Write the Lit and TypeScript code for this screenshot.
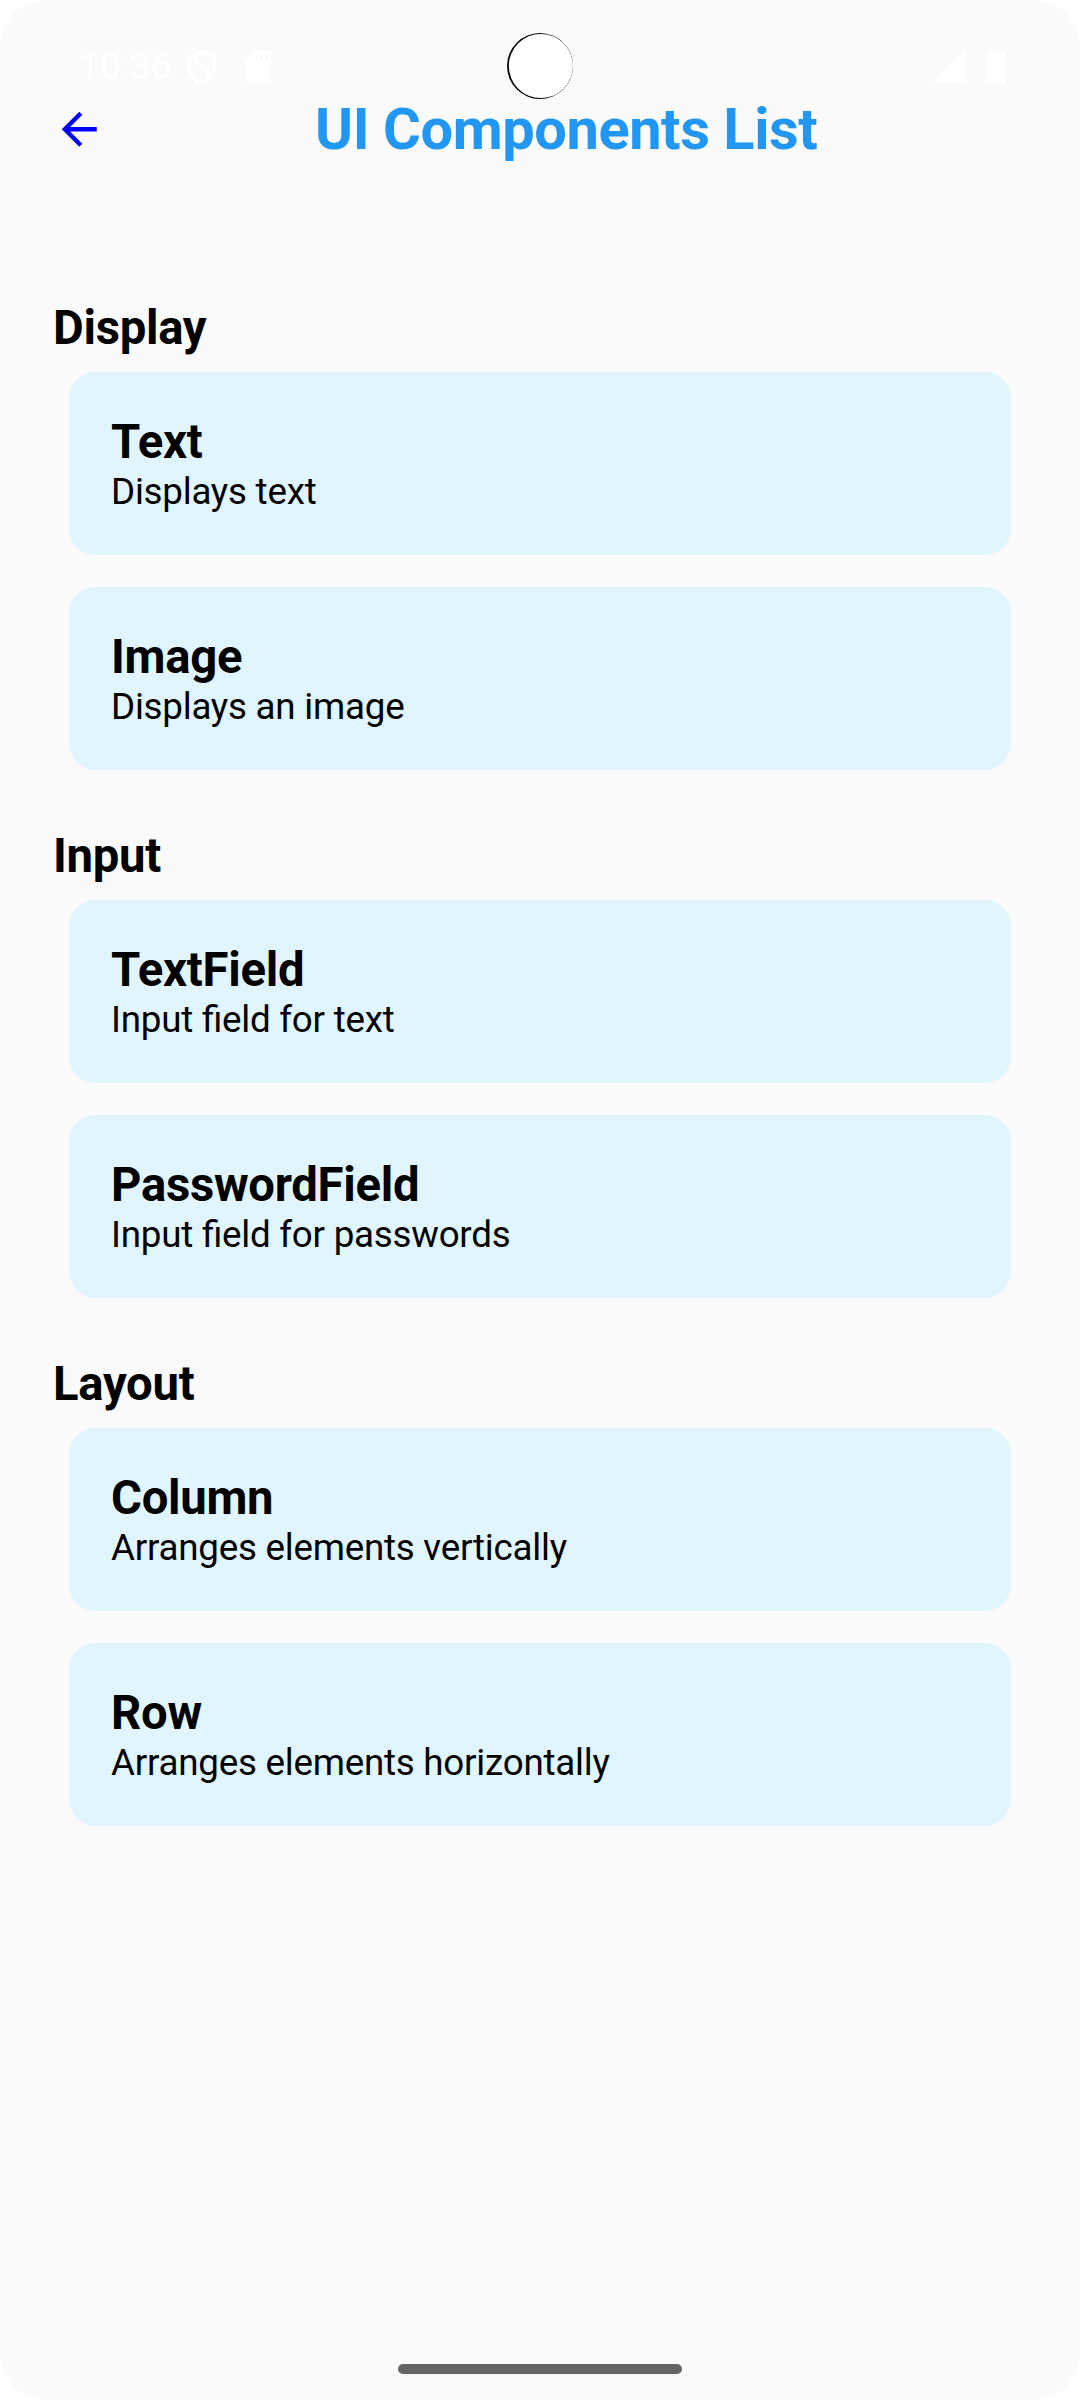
import { LitElement, html, css } from "lit";
import { customElement, property } from "lit/decorators.js";

interface Item {
  name: string;
  description: string;
}

interface Group {
  title: string;
  items: Item[];
}

const GROUPS: Group[] = [
  {
    title: "Display",
    items: [
      { name: "Text", description: "Displays text" },
      { name: "Image", description: "Displays an image" },
    ],
  },
  {
    title: "Input",
    items: [
      { name: "TextField", description: "Input field for text" },
      { name: "PasswordField", description: "Input field for passwords" },
    ],
  },
  {
    title: "Layout",
    items: [
      { name: "Column", description: "Arranges elements vertically" },
      { name: "Row", description: "Arranges elements horizontally" },
    ],
  },
];

@customElement("status-bar")
export class StatusBar extends LitElement {
  static styles = css`
    :host {
      display: block;
      height: 95px;
      position: relative;
      color: #fff;
    }
    .bar {
      display: flex;
      justify-content: space-between;
      align-items: flex-start;
      box-sizing: border-box;
      padding: 45px 74px 0 79px;
    }
    .side {
      display: flex;
      align-items: flex-start;
    }
    .time {
      width: 106px;
      font-size: 36.75px;
      line-height: 43px;
      letter-spacing: 0.25px;
    }
    svg {
      display: block;
      fill: #fff;
    }
    .shield {
      margin: 4px 0 0 1px;
    }
    .card {
      margin: 6px 0 0 28px;
    }
    .signal {
      margin-top: 4px;
    }
    .battery {
      margin: 4px 0 0 19px;
    }
    .camera {
      position: absolute;
      left: 507px;
      top: 33px;
    }
  `;

  render() {
    return html`
      <div class="bar">
        <div class="side">
          <span class="time">10:36</span>
          <svg class="shield" width="31" height="37" viewBox="0 0 31 37">
            <path
              fill="none"
              stroke="#fff"
              stroke-width="3.6"
              d="M15.500 3 L28 7.600 V17 C28 25 22.500 31 15.500 34 C8.500 31 3 25 3 17 V7.600 Z"
            />
            <path
              fill="none"
              stroke="#fff"
              stroke-width="3.8"
              d="M10 5 C9 12 11 14 16 18 C21 22 23 23 21.500 28.500"
            />
          </svg>
          <svg class="card" width="26" height="32" viewBox="0 0 26 32">
            <path
              fill-rule="evenodd"
              d="M10 0 H23 a3 3 0 0 1 3 3 V29 a3 3 0 0 1 -3 3 H3 a3 3 0 0 1 -3 -3 V10 Z M10 3 V9.500 H13 V3 Z M15 3 V9.500 H18 V3 Z M20 3 V9.500 H23 V3 Z"
            />
          </svg>
        </div>
        <div class="side">
          <svg class="signal" width="33" height="33" viewBox="0 0 33 33">
            <path d="M33 0 V33 H0 Z" />
          </svg>
          <svg class="battery" width="21" height="34" viewBox="0 0 21 34">
            <path
              d="M6.500 0 H14.500 V3 H18 a2.500 2.500 0 0 1 2.500 2.500 V31.500 a2.500 2.500 0 0 1 -2.500 2.500 H3 a2.500 2.500 0 0 1 -2.500 -2.500 V5.500 a2.500 2.500 0 0 1 2.500 -2.500 H6.500 Z"
            />
          </svg>
        </div>
      </div>
      <svg class="camera" width="67" height="66" viewBox="0 0 67 66">
        <circle cx="33" cy="33" r="33" fill="#000" />
        <circle cx="33.900" cy="33" r="32.100" />
      </svg>
    `;
  }
}

@customElement("component-card")
export class ComponentCard extends LitElement {
  static styles = css`
    :host {
      display: block;
      background: #e1f5fe;
      border-radius: 26.25px;
      padding: 42px;
      color: #000;
    }
    .name {
      font-size: 47.25px;
      line-height: 56px;
      font-weight: 700;
      letter-spacing: -0.28px;
    }
    .description {
      font-size: 36.75px;
      line-height: 43px;
      letter-spacing: -0.24px;
      font-feature-settings: "liga" 1;
    }
  `;

  @property() name = "";
  @property() description = "";

  render() {
    return html`
      <div class="name">${this.name}</div>
      <div class="description">${this.description}</div>
    `;
  }
}

@customElement("app-root")
export class AppRoot extends LitElement {
  static styles = css`
    :host {
      display: block;
      background: #fff;
    }
    .screen {
      display: flex;
      flex-direction: column;
      width: 1080px;
      height: 2400px;
      background: #fafafa;
      border-radius: 47px;
      overflow: hidden;
      font-family: Roboto, "Liberation Sans", sans-serif;
    }
    .header {
      display: flex;
      align-items: center;
      height: 68px;
      padding: 0 53px;
    }
    .back {
      display: block;
      fill: #0000ff;
    }
    .title {
      flex: 1;
      margin: 0;
      text-align: center;
      font-size: 57.75px;
      line-height: 68px;
      font-weight: 700;
      letter-spacing: -0.43px;
      color: #2196f3;
    }
    .list {
      flex: 1;
      display: flex;
      flex-direction: column;
      gap: 58px;
      padding: 137px 53px 0;
    }
    .group-title {
      margin: 0 0 16px;
      font-size: 47.25px;
      line-height: 56px;
      font-weight: 700;
      letter-spacing: -0.28px;
      color: #000;
    }
    .cards {
      display: flex;
      flex-direction: column;
      gap: 32px;
      padding: 0 16px;
    }
    .nav {
      display: flex;
      justify-content: center;
      padding-bottom: 26px;
    }
    .handle {
      width: 284px;
      height: 10px;
      border-radius: 5px;
      background: #656565;
    }
  `;

  render() {
    return html`
      <div class="screen">
        <status-bar></status-bar>
        <header class="header">
          <svg class="back" width="52.5" height="52.5" viewBox="0 0 24 24">
            <path d="M20 11H7.830l5.590-5.590L12 4l-8 8 8 8 1.410-1.410L7.830 13H20v-2z" />
          </svg>
          <h1 class="title">UI Components List</h1>
        </header>
        <main class="list">
          ${GROUPS.map(
            (group) => html`
              <section>
                <h2 class="group-title">${group.title}</h2>
                <div class="cards">
                  ${group.items.map(
                    (item) => html`<component-card
                      .name=${item.name}
                      .description=${item.description}
                    ></component-card>`
                  )}
                </div>
              </section>
            `
          )}
        </main>
        <div class="nav"><div class="handle"></div></div>
      </div>
    `;
  }
}
